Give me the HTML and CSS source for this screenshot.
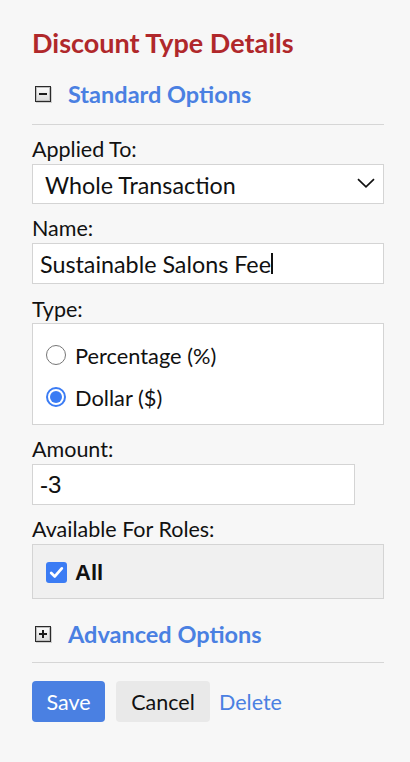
FILE: index.html
```html
<!DOCTYPE html>
<html>
<head>
<meta charset="utf-8">
<link rel="stylesheet" href="styles.css">
</head>
<body>
<div class="panel">
  <h1 class="title">Discount Type Details</h1>
  <div class="section-head">
    <span class="toggle"><span class="bar"></span></span>
    <span class="section-title">Standard Options</span>
  </div>
  <div class="sep"></div>
  <div class="field">
    <div class="label">Applied To:</div>
    <div class="select">
      <span class="val">Whole Transaction</span>
      <svg class="chev" width="18" height="10" viewBox="0 0 18 10"><path d="M1 1.2 L9 8.8 L17 1.2" fill="none" stroke="#111" stroke-width="1.7"/></svg>
    </div>
  </div>
  <div class="field">
    <div class="label">Name:</div>
    <div class="input"><span>Sustainable Salons Fee</span><span class="caret"></span></div>
  </div>
  <div class="field type">
    <div class="label">Type:</div>
    <div class="radio-box">
      <div class="radio-row"><span class="radio"></span><span>Percentage (%)</span></div>
      <div class="radio-row"><span class="radio on"><span class="dot"></span></span><span>Dollar ($)</span></div>
    </div>
  </div>
  <div class="field">
    <div class="label">Amount:</div>
    <div class="input amount"><span>-3</span></div>
  </div>
  <div class="field">
    <div class="label">Available For Roles:</div>
    <div class="roles">
      <span class="check"><svg width="15" height="13" viewBox="0 0 15 13"><path d="M2.2 7 L5.8 10.4 L12.8 2.4" fill="none" stroke="#fff" stroke-width="2.8" stroke-linecap="round" stroke-linejoin="round"/></svg></span>
      <span class="all">All</span>
    </div>
  </div>
  <div class="section-head adv">
    <span class="toggle"><span class="bar"></span><span class="vbar"></span></span>
    <span class="section-title">Advanced Options</span>
  </div>
  <div class="sep sep2"></div>
  <div class="actions">
    <span class="btn save">Save</span>
    <span class="btn cancel">Cancel</span>
    <span class="link">Delete</span>
  </div>
</div>
</body>
</html>
```
FILE: styles.css
```css
html, body { margin: 0; padding: 0; }
body {
  background: #f7f7f7;
  font-family: Lato, "Open Sans", sans-serif;
  color: #111;
  width: 410px;
  height: 762px;
}
.panel {
  padding: 27px 26px 0 32px;
}
.title {
  margin: 0;
  font-size: 27px;
  line-height: 32px;
  height: 32px;
  font-weight: 700;
  color: #b0282b;
}
.section-head {
  display: flex;
  align-items: center;
  margin-top: 20px;
  height: 30px;
}
.toggle {
  position: relative;
  box-sizing: border-box;
  width: 16px;
  height: 16px;
  margin-left: 3px;
  margin-right: 17px;
  border: 1.5px solid #2a2a2a;
  background: linear-gradient(#fdfdfd, #d9d9d9);
  box-shadow: inset 0 0 0 1px #bdbdbd, 1px 1px 0 #cfcfcf;
}
.toggle .bar {
  position: absolute;
  left: 3px; right: 3px; top: 5.5px;
  height: 2px;
  background: #1a1a1a;
}
.toggle .vbar {
  position: absolute;
  top: 3px; bottom: 3px; left: 5.5px;
  width: 2px;
  background: #1a1a1a;
}
.section-title {
  font-size: 23.5px;
  line-height: 30px;
  font-weight: 700;
  color: #4a80e2;
}
.sep {
  height: 1px;
  background: #d6d6d6;
  margin-top: 15px;
}
.sep2 { margin-top: 13px; }
.section-head.adv { margin-top: 20px; }
.field { display: flex; flex-direction: column; }
.label {
  font-size: 21.5px;
  line-height: 24px;
  margin-top: 12px;
  margin-bottom: 3px;
}
.field.type .label { margin-top: 13px; margin-bottom: 2px; }
.select, .input {
  box-sizing: border-box;
  background: #fff;
  border: 1px solid #d4d4d4;
  display: flex;
  align-items: center;
  font-size: 23.3px;
}
.select {
  height: 40px;
  padding: 2px 8px 0 12px;
  justify-content: space-between;
}
.chev { margin-top: -4px; }
.input {
  height: 41px;
  padding: 0 7px;
}
.caret {
  display: inline-block;
  width: 2px;
  height: 21px;
  background: #111;
  margin-left: 0;
}
.input.amount {
  width: 323px;
  font-family: "Liberation Sans", Arial, sans-serif;
  font-size: 24px;
}
.radio-box {
  box-sizing: border-box;
  height: 102px;
  background: #fff;
  border: 1px solid #d4d4d4;
  padding: 19px 0 0 13px;
  display: flex;
  flex-direction: column;
  gap: 18px;
}
.radio-row {
  display: flex;
  align-items: center;
  font-size: 21.8px;
  height: 24px;
}
.radio {
  box-sizing: border-box;
  width: 20px;
  height: 20px;
  border-radius: 50%;
  border: 1.5px solid #767676;
  margin-right: 9px;
  background: #fff;
  display: flex;
  align-items: center;
  justify-content: center;
}
.radio.on {
  border: 2px solid #3b7cf4;
}
.radio .dot {
  width: 12px;
  height: 12px;
  border-radius: 50%;
  background: #3b7cf4;
}
.roles {
  box-sizing: border-box;
  height: 55px;
  background: #f0f0f0;
  border: 1px solid #d4d4d4;
  display: flex;
  align-items: center;
  padding: 2px 0 0 13px;
}
.check {
  width: 21px;
  height: 21px;
  border-radius: 3px;
  background: #3b7cf4;
  display: flex;
  align-items: center;
  justify-content: center;
  margin-right: 8px;
}
.all {
  font-family: "Liberation Sans", Arial, sans-serif;
  font-weight: 700;
  font-size: 22px;
}
.actions {
  display: flex;
  align-items: center;
  margin-top: 18px;
}
.btn {
  box-sizing: border-box;
  height: 41px;
  display: flex;
  align-items: center;
  justify-content: center;
  font-size: 21.5px;
  border-radius: 4px;
}
.save {
  width: 73px;
  background: #4a80e2;
  color: #fff;
  margin-right: 11px;
}
.cancel {
  width: 94px;
  background: #e9e9e9;
  color: #111;
  margin-right: 9px;
}
.link {
  font-size: 21.5px;
  color: #4a80e2;
}
```
